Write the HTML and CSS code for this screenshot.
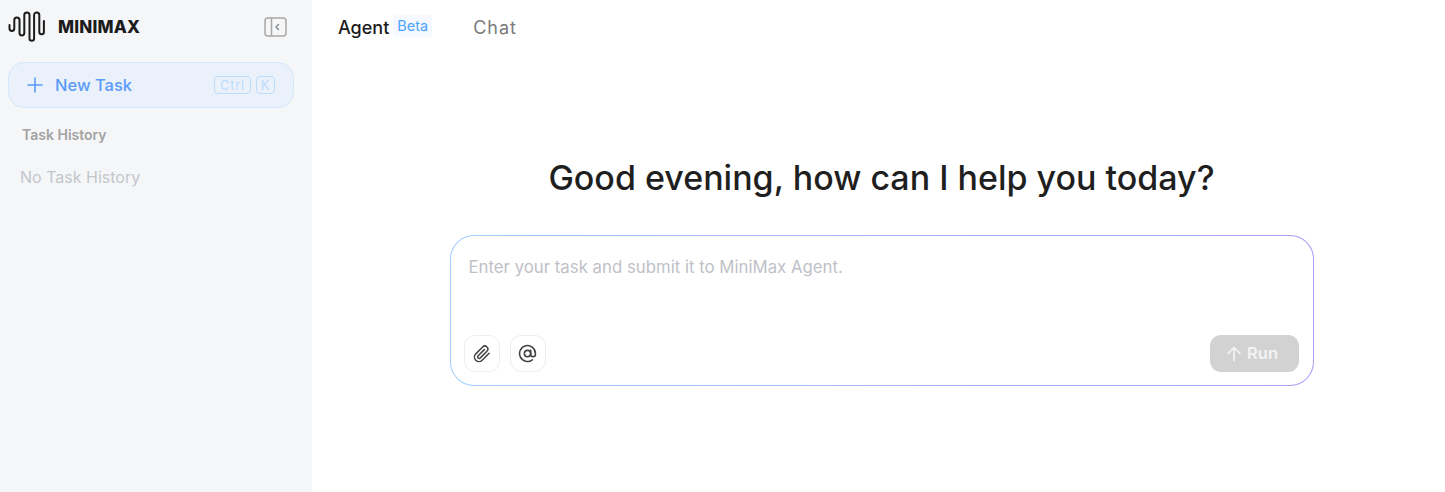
FILE: index.html
```html
<!DOCTYPE html>
<html lang="en">
<head>
<meta charset="utf-8">
<title>MiniMax Agent</title>
<link rel="stylesheet" href="styles.css">
</head>
<body>
<div class="app">
  <aside class="sidebar">
    <div class="brand-row">
      <div class="brand">
        <svg class="logo" width="39" height="32" viewBox="0 0 39 32" fill="none" stroke="#1c1c1c" stroke-width="2" stroke-linecap="round" stroke-linejoin="round">
          <path d="M1.5 14v3.5a2.4 2.4 0 0 0 4.8 0V9a2.6 2.6 0 0 1 5.2 0v13a2.4 2.4 0 0 0 4.8 0V4a2.6 2.6 0 0 1 5.2 0v23.5a2.3 2.3 0 0 0 4.6 0V4a2.6 2.6 0 0 1 5.2 0v17a2.3 2.3 0 0 0 4.6 0V10"/>
        </svg>
        <span class="brand-name">MINIMAX</span>
      </div>
      <svg class="collapse" width="23" height="20" viewBox="0 0 23 20" fill="none" stroke="#a8a8a8" stroke-width="1.5" stroke-linecap="round" stroke-linejoin="round">
        <rect x="1" y="1" width="21" height="18" rx="3"/>
        <path d="M7.5 1v18"/>
        <path d="M14.5 7.5L12 10l2.5 2.5" stroke="#8a8a8a"/>
      </svg>
    </div>
    <div class="new-task">
      <svg class="plus" width="16" height="16" viewBox="0 0 16 16" stroke="#5a9bf8" stroke-width="1.6" stroke-linecap="round">
        <path d="M8 1v14M1 8h14"/>
      </svg>
      <span class="new-task-label">New Task</span>
      <span class="keys">
        <span class="key key-ctrl">Ctrl</span>
        <span class="key key-k">K</span>
      </span>
    </div>
    <div class="history-title">Task History</div>
    <div class="history-empty">No Task History</div>
  </aside>
  <main class="main">
    <nav class="tabs">
      <span class="tab tab-active">Agent</span>
      <span class="beta">Beta</span>
      <span class="tab tab-muted">Chat</span>
    </nav>
    <section class="center">
      <h1 class="greeting">Good evening, how can I help you today?</h1>
      <div class="composer">
        <div class="composer-inner">
          <div class="placeholder">Enter your task and submit it to MiniMax Agent.</div>
          <div class="composer-actions">
            <span class="icon-btn">
              <svg width="18" height="18" viewBox="0 0 24 24" fill="none" stroke="#444" stroke-width="2" stroke-linecap="round" stroke-linejoin="round">
                <path d="M21.4 11.1l-9.2 9.2a6 6 0 0 1-8.5-8.5l9.2-9.2a4 4 0 0 1 5.7 5.7l-9.2 9.2a2 2 0 0 1-2.8-2.8l8.5-8.5"/>
              </svg>
            </span>
            <span class="icon-btn">
              <svg width="19" height="19" viewBox="0 0 24 24" fill="none" stroke="#444" stroke-width="2" stroke-linecap="round" stroke-linejoin="round">
                <circle cx="12" cy="12" r="4"/>
                <path d="M16 8v5a3 3 0 0 0 6 0v-1a10 10 0 1 0-3.9 7.9"/>
              </svg>
            </span>
            <span class="run">
              <svg width="16" height="16" viewBox="0 0 16 16" fill="none" stroke="#f4f4f4" stroke-width="1.7" stroke-linecap="round" stroke-linejoin="round">
                <path d="M8 14.5V1.5M2 7.5l6-6 6 6"/>
              </svg>
              <span class="run-label">Run</span>
            </span>
          </div>
        </div>
      </div>
    </section>
  </main>
</div>
</body>
</html>
```
FILE: styles.css
```css
* { box-sizing: border-box; }
html, body { margin: 0; height: 100%; background: #fff; }
body { font-family: "Inter", "Open Sans", "Liberation Sans", sans-serif; overflow: hidden; }
.app { display: flex; height: 492px; }

.sidebar { width: 312px; flex: none; background: #f5f6f8; padding: 0 18px 0 8px; }
.brand-row { display: flex; align-items: center; justify-content: space-between; height: 62px; padding: 0 7px 8px 0; }
.brand { display: flex; align-items: center; gap: 11px; }
.logo { display: block; }
.brand-name { font-size: 17px; font-weight: 800; letter-spacing: 0.2px; color: #1c1c1c; }
.collapse { display: block; }

.new-task { display: flex; align-items: center; height: 46px; padding: 0 18px 0 18px; background: #ebf1fa; border: 1px solid #d3e6fb; border-radius: 16px; }
.new-task-label { margin-left: 12px; font-size: 16.5px; font-weight: 500; color: #5a9bf8; }
.keys { display: flex; gap: 5px; margin-left: auto; }
.key { display: block; height: 18px; line-height: 16px; border: 1px solid #bcdcfa; border-radius: 4px; font-size: 13px; letter-spacing: 0.7px; text-align: center; color: #bcdcfa; }
.key-ctrl { width: 37px; }
.key-k { width: 19px; }

.history-title { margin: 19px 0 0 14px; font-size: 14px; line-height: 16px; font-weight: 600; color: #a3a3a3; }
.history-empty { margin: 23px 0 0 12px; font-size: 16px; line-height: 22px; color: #c4c6cc; }

.main { flex: 1; min-width: 0; }
.tabs { display: flex; align-items: center; height: 56px; padding-left: 26px; }
.tab { font-size: 18px; line-height: 24px; }
.tab-active { color: #1c1c1c; font-weight: 500; }
.tab-muted { margin-left: 41px; color: #7a7a7a; letter-spacing: 1px; }
.beta { margin: -4px 0 0 4px; padding: 2px 4px; border-radius: 4px; background: #f6f9ff; color: #4da3ff; font-size: 14.5px; line-height: 18px; }

.center { display: flex; flex-direction: column; align-items: center; padding-left: 6px; }
.greeting { margin: 100px 0 0; font-size: 34px; line-height: 44px; font-weight: 500; color: #1f1f1f; }
.composer { width: 864px; height: 151px; margin-top: 35px; padding: 1px; border-radius: 24px; background: linear-gradient(90deg, #a3cfff, #a59ef5); }
.composer-inner { display: flex; flex-direction: column; justify-content: space-between; height: 100%; padding: 20px 14px 13px 13px; background: #fff; border-radius: 23px; }
.placeholder { padding-left: 5px; font-size: 16.8px; line-height: 22px; color: #bfc1c8; }
.composer-actions { display: flex; align-items: center; gap: 10px; }
.icon-btn { display: flex; align-items: center; justify-content: center; width: 36px; height: 37px; border: 1px solid #eeeeee; border-radius: 11px; background: #fff; }
.run { display: flex; align-items: center; justify-content: center; gap: 5px; width: 89px; height: 37px; margin-left: auto; padding-right: 4px; border-radius: 11px; background: #d2d2d2; color: #f4f4f4; font-size: 16.5px; font-weight: 600; }
.run-label { display: block; line-height: 20px; margin-top: -2px; }
```
